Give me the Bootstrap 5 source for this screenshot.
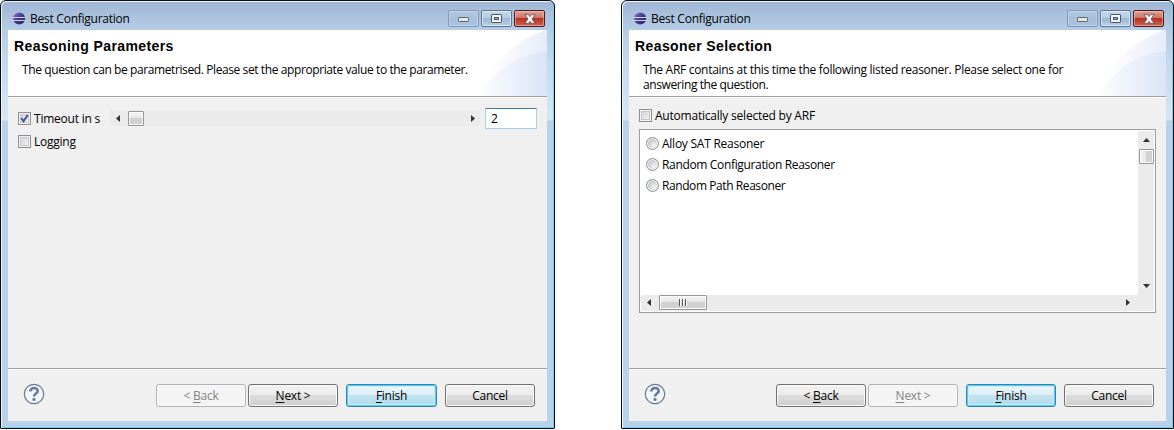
<!DOCTYPE html>
<html lang="en">
<head>
<meta charset="utf-8">
<title>Best Configuration</title>
<link href="https://cdn.jsdelivr.net/npm/bootstrap@5.3.0/dist/css/bootstrap.min.css" rel="stylesheet">
<script src="https://cdn.jsdelivr.net/npm/bootstrap@5.3.0/dist/js/bootstrap.bundle.min.js"></script>
<style>
body{width:1174px;height:430px;overflow:hidden;background:#fff;font:12px/15px "Open Sans","Noto Sans",sans-serif;color:#000;letter-spacing:-.25px}
.win{height:429px;border:1px solid #080b10;border-radius:6px 6px 1px 1px;padding:0 7px 7px;box-shadow:inset 1px 1px 0 #eef5fb,inset -1px -1px 0 #6fd3ee;
background:linear-gradient(#9db5d3 0,#a8c0dc 12px,#b7cde6 30px,#c4d9ee 60px,#d6e6f5 119px,#b9d1ea 120px,#b9d1ea 100%)}
.win-a{width:555px}
.win-b{width:553px;margin-left:66px}
.titlebar{height:29px;padding:9px 2px 0 4px}
.titlebar .cap{margin-left:4px;height:17px;line-height:18px}
.wb{width:31px;height:17px;border:1px solid #5b7694;border-radius:2px;box-shadow:inset 0 0 0 1px rgba(255,255,255,.55);background:linear-gradient(#c3d5e9 0,#b6cce4 48%,#9bb8d8 50%,#b5d0e8)}
.wb.dim{border-color:#8299b3;background:linear-gradient(#b3c8e0,#a8c0dc 50%,#a7c2df);box-shadow:inset 0 0 0 1px rgba(255,255,255,.25)}
.wb.x{border-color:#501a20;background:linear-gradient(#dda095 0,#cf7567 46%,#b8301e 50%,#cc6552);box-shadow:inset 0 0 0 1px rgba(255,210,200,.5)}
.content{height:391px;background:#f0f0f0}
.head{height:67px;border-bottom:1px solid #a0a0a0;padding:7px 0 0 6px}
.head h1{font:bold 14px/18px "Liberation Sans",sans-serif;margin:0;letter-spacing:.4px}
.head p{margin:7px 0 0 8px;width:450px}
.t1{letter-spacing:-.4px}.t4{letter-spacing:-.3px}.t5{letter-spacing:-.4px}.t6,.t2{letter-spacing:-.22px}.t8{letter-spacing:-.34px}.t9{letter-spacing:-.42px}
.head .swoosh{right:0;top:0}
.main{height:271px;border-top:1px solid #fff}
.foot{height:53px;border-top:1px solid #a0a0a0;box-shadow:inset 0 1px #fff;padding:0 12px 0 15px}
.help{margin-top:-2px}
.cb{width:13px;height:13px;border:1px solid #8e8f8f;background:linear-gradient(135deg,#ccd0d5,#f6f6f6);box-shadow:inset 0 0 0 1px #f4f4f4,inset 0 0 0 2px #c4c8cc}
.rb{width:13px;height:13px;border:1px solid #8e8f8f;border-radius:50%;background:radial-gradient(circle at 65% 65%,#f4f4f4 0,#c5c9ce 60%);box-shadow:inset 0 0 0 1px #f4f4f4}
.push{width:90px;height:23px;padding:0;border:1px solid #707070;border-radius:3px;font-size:12px;line-height:21px;text-align:center;background:linear-gradient(#f2f2f2 0,#ebebeb 49%,#dddddd 50%,#cfcfcf);box-shadow:inset 0 0 0 1px #fbfbfb}
.push.off{color:#838383;border-color:#adb2b5;background:#f4f4f4}
.push.def{border-color:#3c7fb1;background:linear-gradient(#edf6fa 0,#dceef6 49%,#c4e3f0 50%,#b3dbed);box-shadow:inset 0 0 0 1px #4fd0f2,inset 0 0 0 2px #c6effb}
.push u{text-underline-offset:2px}
.sbar{background:#ebebeb;height:16px}
.thumb{border:1px solid #979797;border-radius:1px;box-shadow:inset 0 0 0 1px #fafafa}
.th-h{background:linear-gradient(#f4f4f4 0,#e6e6e6 45%,#d2d2d2 50%,#d0d0d0)}
.th-v{background:linear-gradient(90deg,#f4f4f4 0,#e6e6e6 45%,#d2d2d2 50%,#d0d0d0)}
.field{width:52px;height:21px;border:1px solid #a9d0e6;border-top-color:#3d7bad;border-radius:1px;background:#fff;padding-left:5px;line-height:20px}
.list{width:517px;height:184px;border:1px solid #9a9da3;background:#fff;padding:1px}
svg{display:block}
</style>
</head>
<body>
<svg width="0" height="0" class="position-absolute"><defs>
<linearGradient id="ball" x1="0" y1="0" x2="1" y2="1"><stop offset="0" stop-color="#8f80c4"/><stop offset=".45" stop-color="#443c90"/><stop offset="1" stop-color="#22205e"/></linearGradient>
<linearGradient id="s1" x1="0" y1="0" x2="1" y2="0"><stop offset=".2" stop-color="#fff"/><stop offset="1" stop-color="#e6ecf9"/></linearGradient>
<linearGradient id="s2" x1="0" y1="0" x2="1" y2="0"><stop offset="0" stop-color="#fdfdff"/><stop offset="1" stop-color="#dbe4f6"/></linearGradient>
<symbol id="logo" viewBox="0 0 14 13"><ellipse cx="5.4" cy="6.5" rx="5.2" ry="5.6" fill="#c2a6d2"/><circle cx="7.2" cy="6.5" r="6" fill="url(#ball)"/><path d="M.2 5.5h13.4M.2 8.5h13.4" stroke="#c9d3ee" stroke-width="1"/></symbol>
<symbol id="min" viewBox="0 0 11 5"><rect x=".5" y=".5" width="10" height="4" rx=".6" fill="#e6e6e3" stroke="#626872"/></symbol>
<symbol id="max" viewBox="0 0 11 9"><rect x=".5" y=".5" width="10" height="8" rx=".6" fill="#f5f7fa" stroke="#4e5668"/><rect x="3.5" y="3.5" width="4" height="2" fill="#8eabd0" stroke="#4e5668"/></symbol>
<symbol id="close" viewBox="0 0 12 10"><path d="M.8.6h3.6L6 2.6 7.6.6h3.6L8 5l3.2 4.4H7.6L6 7.4 4.4 9.4H.8L4 5z" fill="#fafafa" stroke="#5b4a5a" stroke-width=".8"/></symbol>
<symbol id="swoosh" viewBox="0 0 75 66"><path d="M0 66C20 33 42 10 75 0v66z" fill="url(#s1)"/><path d="M7 66C22 40 45 25 75 21v45z" fill="url(#s2)"/></symbol>
<symbol id="help" viewBox="0 0 22 22"><circle cx="11" cy="11" r="9.7" fill="#f4f7fb" stroke="#687890" stroke-width="1.2"/><path d="M7.3 8.5C7.2 3.9 14.8 4 14.7 8.1 14.6 10.7 11 10.5 11 13.6" fill="none" stroke="#66799c" stroke-width="2.6"/><circle cx="11" cy="16.4" r="1.6" fill="#66799c"/></symbol>
<symbol id="al" viewBox="0 0 4 7"><path d="M4 0v7L0 3.5z" fill="#333"/></symbol>
<symbol id="ar" viewBox="0 0 4 7"><path d="M0 0v7L4 3.5z" fill="#333"/></symbol>
<symbol id="au" viewBox="0 0 7 4"><path d="M0 4h7L3.5 0z" fill="#333"/></symbol>
<symbol id="ad" viewBox="0 0 7 4"><path d="M0 0h7L3.5 4z" fill="#333"/></symbol>
</defs></svg>
<div class="d-flex">
<section class="win win-a">
  <div class="titlebar d-flex align-items-start"><svg width="14" height="13" style="margin-top:2px"><use href="#logo"/></svg><span class="cap">Best Configuration</span>
    <div class="d-flex ms-auto" style="gap:2px"><div class="wb dim d-flex justify-content-center align-items-end pb-1"><svg width="11" height="5"><use href="#min"/></svg></div><div class="wb d-flex justify-content-center align-items-center"><svg width="11" height="9"><use href="#max"/></svg></div><div class="wb x d-flex justify-content-center align-items-center"><svg width="12" height="10"><use href="#close"/></svg></div></div></div>
  <div class="content">
    <div class="head bg-white position-relative"><svg class="swoosh position-absolute" width="75" height="66"><use href="#swoosh"/></svg><h1>Reasoning Parameters</h1><p class="position-relative text-nowrap"><span class="t1">The question can be parametrised. Please set the appropriate value to the parameter.</span></p></div>
    <div class="main" style="padding:10px 10px 0">
      <div class="d-flex align-items-center" style="height:20px"><div class="cb"><svg width="11" height="11" viewBox="0 0 11 11"><path d="M2.3 5l2.2 3.3L8.8 2" fill="none" stroke="#42589b" stroke-width="2"/></svg></div><span class="t2" style="margin-left:3px;width:76px">Timeout in s</span>
        <div class="sbar d-flex align-items-center" style="width:370px;padding:0 5px 0 6px"><svg width="4" height="7"><use href="#al"/></svg><div class="thumb th-h" style="width:16px;height:15px;margin-left:8px"></div><svg class="ms-auto" width="4" height="7"><use href="#ar"/></svg></div>
        <div class="field align-self-start" style="margin-left:5px">2</div></div>
      <div class="d-flex align-items-center" style="margin-top:6px"><div class="cb"></div><span class="t3" style="margin-left:3px">Logging</span></div>
    </div>
    <div class="foot d-flex align-items-center"><svg class="help" width="22" height="22"><use href="#help"/></svg><div class="push off ms-auto">&lt; <u>B</u>ack</div><div class="push" style="margin-left:2px"><u>N</u>ext &gt;</div><div class="push def" style="margin-left:8px;width:91px"><u>F</u>inish</div><div class="push" style="margin-left:8px">Cancel</div></div>
  </div>
</section>
<section class="win win-b">
  <div class="titlebar d-flex align-items-start"><svg width="14" height="13" style="margin-top:2px"><use href="#logo"/></svg><span class="cap">Best Configuration</span>
    <div class="d-flex ms-auto" style="gap:2px"><div class="wb dim d-flex justify-content-center align-items-end pb-1"><svg width="11" height="5"><use href="#min"/></svg></div><div class="wb d-flex justify-content-center align-items-center"><svg width="11" height="9"><use href="#max"/></svg></div><div class="wb x d-flex justify-content-center align-items-center"><svg width="12" height="10"><use href="#close"/></svg></div></div></div>
  <div class="content">
    <div class="head bg-white position-relative"><svg class="swoosh position-absolute" width="75" height="66"><use href="#swoosh"/></svg><h1>Reasoner Selection</h1><p class="position-relative text-nowrap"><span class="t4">The ARF contains at this time the following listed reasoner. Please select one for</span><br><span class="t5">answering the question.</span></p></div>
    <div class="main" style="padding:10px 10px 0">
      <div class="d-flex align-items-center" style="height:15px"><div class="cb"></div><span class="t6" style="margin-left:3px">Automatically selected by ARF</span></div>
      <div class="list d-flex flex-column" style="margin-top:6px">
        <div class="d-flex" style="height:164px">
          <div class="flex-grow-1" style="padding:2px 0 0 5px">
            <div class="d-flex align-items-center" style="height:21px"><div class="rb"></div><span class="t7" style="margin-left:3px">Alloy SAT Reasoner</span></div>
            <div class="d-flex align-items-center" style="height:21px"><div class="rb"></div><span class="t8" style="margin-left:3px">Random Configuration Reasoner</span></div>
            <div class="d-flex align-items-center" style="height:21px"><div class="rb"></div><span class="t9" style="margin-left:3px">Random Path Reasoner</span></div>
          </div>
          <div class="sbar d-flex flex-column align-items-center" style="width:16px;height:164px;padding:7px 0"><svg width="7" height="4"><use href="#au"/></svg><div class="thumb th-v" style="width:15px;height:15px;margin-top:7px"></div><svg class="mt-auto" width="7" height="4"><use href="#ad"/></svg></div>
        </div>
        <div class="sbar d-flex align-items-center" style="padding:0 24px 1px 6px"><svg width="4" height="7"><use href="#al"/></svg><div class="thumb th-h d-flex justify-content-center align-items-center" style="width:48px;height:15px;margin-left:8px"><svg width="8" height="7"><path d="M.5 0v7M3.5 0v7M6.5 0v7" stroke="#555"/><path d="M1.5 0v7M4.5 0v7M7.5 0v7" stroke="#fff"/></svg></div><svg class="ms-auto" width="4" height="7"><use href="#ar"/></svg></div>
      </div>
    </div>
    <div class="foot d-flex align-items-center"><svg class="help" width="22" height="22"><use href="#help"/></svg><div class="push ms-auto">&lt; <u>B</u>ack</div><div class="push off" style="margin-left:2px"><u>N</u>ext &gt;</div><div class="push def" style="margin-left:8px"><u>F</u>inish</div><div class="push" style="margin-left:8px">Cancel</div></div>
  </div>
</section>
</div>
</body>
</html>
